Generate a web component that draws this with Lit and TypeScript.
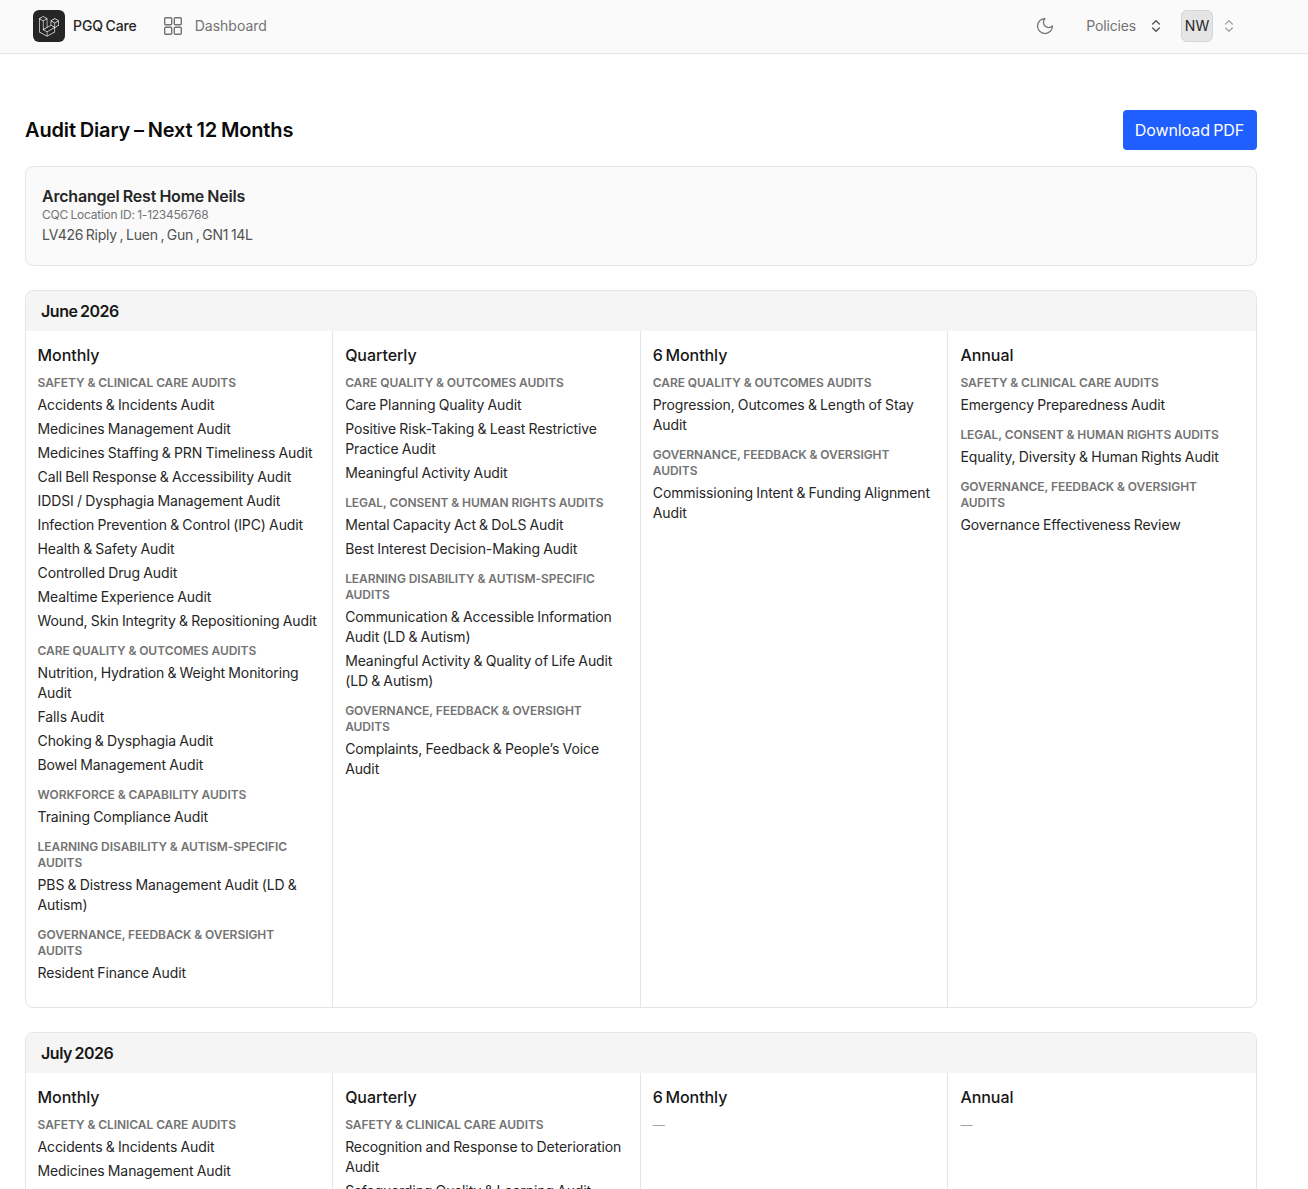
import { LitElement, html, css, svg } from "lit";
import { customElement } from "lit/decorators.js";

type Group = [string, string[]];
type Col = [string, Group[]];

const june: Col[] = [
  ["Monthly", [
    ["Safety & Clinical Care Audits", ["Accidents & Incidents Audit", "Medicines Management Audit", "Medicines Staffing & PRN Timeliness Audit", "Call Bell Response & Accessibility Audit", "IDDSI / Dysphagia Management Audit", "Infection Prevention & Control (IPC) Audit", "Health & Safety Audit", "Controlled Drug Audit", "Mealtime Experience Audit", "Wound, Skin Integrity & Repositioning Audit"]],
    ["Care Quality & Outcomes Audits", ["Nutrition, Hydration & Weight Monitoring Audit", "Falls Audit", "Choking & Dysphagia Audit", "Bowel Management Audit"]],
    ["Workforce & Capability Audits", ["Training Compliance Audit"]],
    ["Learning Disability & Autism-Specific Audits", ["PBS & Distress Management Audit (LD & Autism)"]],
    ["Governance, Feedback & Oversight Audits", ["Resident Finance Audit"]],
  ]],
  ["Quarterly", [
    ["Care Quality & Outcomes Audits", ["Care Planning Quality Audit", "Positive Risk-Taking & Least Restrictive Practice Audit", "Meaningful Activity Audit"]],
    ["Legal, Consent & Human Rights Audits", ["Mental Capacity Act & DoLS Audit", "Best Interest Decision-Making Audit"]],
    ["Learning Disability & Autism-Specific Audits", ["Communication & Accessible Information Audit (LD & Autism)", "Meaningful Activity & Quality of Life Audit (LD & Autism)"]],
    ["Governance, Feedback & Oversight Audits", ["Complaints, Feedback & People’s Voice Audit"]],
  ]],
  ["6 Monthly", [
    ["Care Quality & Outcomes Audits", ["Progression, Outcomes & Length of Stay Audit"]],
    ["Governance, Feedback & Oversight Audits", ["Commissioning Intent & Funding Alignment Audit"]],
  ]],
  ["Annual", [
    ["Safety & Clinical Care Audits", ["Emergency Preparedness Audit"]],
    ["Legal, Consent & Human Rights Audits", ["Equality, Diversity & Human Rights Audit"]],
    ["Governance, Feedback & Oversight Audits", ["Governance Effectiveness Review"]],
  ]],
];

const july: Col[] = [
  ["Monthly", [["Safety & Clinical Care Audits", ["Accidents & Incidents Audit", "Medicines Management Audit", "Medicines Staffing & PRN Timeliness Audit"]]]],
  ["Quarterly", [["Safety & Clinical Care Audits", ["Recognition and Response to Deterioration Audit", "Safeguarding Quality & Learning Audit"]]]],
  ["6 Monthly", []],
  ["Annual", []],
];

const months: [string, Col[]][] = [["June 2026", june], ["July 2026", july]];

const LOGO = "M61.8548 14.6253C61.8778 14.7102 61.8895 14.7978 61.8897 14.8858V28.5615C61.8898 28.737 61.8434 28.9095 61.7554 29.0614C61.6675 29.2132 61.5409 29.3392 61.3887 29.4265L49.9104 36.0351V49.1337C49.9104 49.4902 49.7209 49.8192 49.4118 49.9987L25.4519 63.7916C25.3971 63.8227 25.3372 63.8427 25.2774 63.8639C25.255 63.8714 25.2338 63.8851 25.2101 63.8913C25.0426 63.9354 24.8666 63.9354 24.6991 63.8913C24.6716 63.8838 24.6467 63.8689 24.6205 63.8589C24.5657 63.8389 24.5084 63.8215 24.456 63.7916L0.501061 49.9987C0.348882 49.9113 0.222437 49.7853 0.134469 49.6334C0.0465019 49.4816 0.000120578 49.3092 0 49.1337L0 8.10652C0 8.01678 0.0124642 7.92953 0.0348998 7.84477C0.0423783 7.8161 0.0598282 7.78993 0.0697995 7.76126C0.0884958 7.70891 0.105946 7.65531 0.133367 7.6067C0.152063 7.5743 0.179485 7.54812 0.20192 7.51821C0.230588 7.47832 0.256763 7.43719 0.290416 7.40229C0.319084 7.37362 0.356476 7.35243 0.388883 7.32751C0.425029 7.29759 0.457436 7.26518 0.498568 7.2415L12.4779 0.345059C12.6296 0.257786 12.8015 0.211853 12.9765 0.211853C13.1515 0.211853 13.3234 0.257786 13.475 0.345059L25.4531 7.2415H25.4556C25.4955 7.26643 25.5292 7.29759 25.5653 7.32626C25.5977 7.35119 25.6339 7.37362 25.6625 7.40104C25.6974 7.43719 25.7224 7.47832 25.7523 7.51821C25.7735 7.54812 25.8021 7.5743 25.8196 7.6067C25.8483 7.65656 25.8645 7.70891 25.8844 7.76126C25.8944 7.78993 25.9118 7.8161 25.9193 7.84602C25.9423 7.93096 25.954 8.01853 25.9542 8.10652V33.7317L35.9355 27.9844V14.8846C35.9355 14.7973 35.948 14.7088 35.9704 14.6253C35.9792 14.5954 35.9954 14.5692 36.0053 14.5405C36.0253 14.4882 36.0427 14.4346 36.0702 14.386C36.0888 14.3536 36.1163 14.3274 36.1375 14.2975C36.1674 14.2576 36.1923 14.2165 36.2272 14.1816C36.2559 14.1529 36.292 14.1317 36.3244 14.1068C36.3618 14.0769 36.3942 14.0445 36.4341 14.0208L48.4147 7.12434C48.5663 7.03694 48.7383 6.99094 48.9133 6.99094C49.0883 6.99094 49.2602 7.03694 49.4118 7.12434L61.3899 14.0208C61.4323 14.0457 61.4647 14.0769 61.5021 14.1055C61.5333 14.1305 61.5694 14.1529 61.5981 14.1803C61.633 14.2165 61.6579 14.2576 61.6878 14.2975C61.7103 14.3274 61.7377 14.3536 61.7551 14.386C61.7838 14.4346 61.8 14.4882 61.8199 14.5405C61.8312 14.5692 61.8474 14.5954 61.8548 14.6253ZM59.893 27.9844V16.6121L55.7013 19.0252L49.9104 22.3593V33.7317L59.8942 27.9844H59.893ZM47.9149 48.5566V37.1768L42.2187 40.4299L25.953 49.7133V61.2003L47.9149 48.5566ZM1.99677 9.83281V48.5566L23.9562 61.199V49.7145L12.4841 43.2219L12.4804 43.2194L12.4754 43.2169C12.4368 43.1945 12.4044 43.1621 12.3682 43.1347C12.3371 43.1097 12.3009 43.0898 12.2735 43.0624L12.271 43.0586C12.2386 43.0275 12.2162 42.9888 12.1887 42.9539C12.1638 42.9203 12.1339 42.8916 12.114 42.8567L12.1127 42.853C12.0903 42.8156 12.0766 42.7707 12.0604 42.7283C12.0442 42.6909 12.023 42.656 12.013 42.6161C12.0005 42.5688 11.998 42.5177 11.9931 42.4691C11.9881 42.4317 11.9781 42.3943 11.9781 42.3569V15.5801L6.18848 12.2446L1.99677 9.83281ZM12.9777 2.36177L2.99764 8.10652L12.9752 13.8513L22.9541 8.10527L12.9752 2.36177H12.9777ZM18.1678 38.2138L23.9574 34.8809V9.83281L19.7657 12.2459L13.9749 15.5801V40.6281L18.1678 38.2138ZM48.9133 9.14105L38.9344 14.8858L48.9133 20.6305L58.8909 14.8846L48.9133 9.14105ZM47.9149 22.3593L42.124 19.0252L37.9323 16.6121V27.9844L43.7219 31.3174L47.9149 33.7317V22.3593ZM24.9533 47.987L39.59 39.631L46.9065 35.4555L36.9352 29.7145L25.4544 36.3242L14.9907 42.3482L24.9533 47.987Z";

@customElement("app-root")
export class AppRoot extends LitElement {
  static styles = css`
    :host { display: block; height: 1189px; overflow: hidden; font-family: Inter, "Liberation Sans", sans-serif; color: #171717; background: #fff; }
    .nav { height: 52px; padding: 0 32px 1px 33px; border-bottom: 1px solid #e5e5e5; background: #fafafa; display: flex; align-items: center; }
    .logo { width: 32px; height: 32px; border-radius: 6px; background: #262626; display: flex; align-items: center; justify-content: center; color: #fff; }
    .brand { margin-left: 8px; padding-bottom: 1px; font-size: 14px; font-weight: 500; color: #262626; letter-spacing: -0.1px; word-spacing: -1px; }
    .dash { margin-left: 26px; display: flex; align-items: center; gap: 12px; font-size: 14px; font-weight: 400; color: #737373; }
    .dash-label { padding-bottom: 1px; }
    .spacer { flex: 1; }
    .nav-icon { display: block; color: #737373; }
    .policies { margin-left: 31px; padding-bottom: 1px; font-size: 14px; font-weight: 400; letter-spacing: -0.15px; color: #737373; }
    .chev { margin-left: 12px; color: #525252; }
    .avatar { margin-left: 17px; width: 32px; height: 32px; box-sizing: border-box; padding-bottom: 1px; border: 1px solid #d4d4d4; border-radius: 6px; background: #e5e5e5; display: flex; align-items: center; justify-content: center; font-size: 14px; font-weight: 400; color: #262626; }
    .chev2 { margin-left: 8px; margin-right: 39px; color: #a3a3a3; }
    main { padding: 56px 51px 0 25px; display: flex; flex-direction: column; }
    .head { display: flex; justify-content: space-between; align-items: center; height: 40px; }
    h1 { margin: 0; font-size: 20px; line-height: 28px; font-weight: 600; letter-spacing: -0.15px; word-spacing: -1px; color: #0a0a0a; }
    .btn { height: 40px; width: 134px; box-sizing: border-box; padding: 0 1px 0 0; background: #1f5eff; color: #fff; border: 0; border-radius: 4px; font: 400 16px/40px Inter, sans-serif; letter-spacing: -0.1px; word-spacing: -1px; }
    .info { margin-top: 16px; height: 100px; box-sizing: border-box; padding: 19px 16px 0; border: 1px solid #e5e5e5; border-radius: 8px; background: #fafafa; }
    .info-name { font-size: 16px; line-height: 20px; font-weight: 600; letter-spacing: -0.2px; word-spacing: -0.6px; color: #262626; }
    .info-id { font-size: 12px; line-height: 16px; letter-spacing: -0.25px; word-spacing: -0.5px; color: #737373; margin-top: 1px; }
    .info-addr { font-size: 14px; line-height: 20px; letter-spacing: -0.25px; word-spacing: -1px; color: #525252; margin-top: 2px; }
    .month { margin-top: 24px; border: 1px solid #e5e5e5; border-radius: 8px; overflow: hidden; }
    .month-head { height: 40px; background: #f5f5f5; padding-left: 15px; font-size: 16px; line-height: 40px; font-weight: 600; letter-spacing: -0.45px; word-spacing: -1.2px; color: #171717; }
    .grid { display: grid; grid-template-columns: repeat(4, 1fr); margin-left: -0.5px; }
    .col { padding: 12px 12px 20px; border-right: 1px solid #e5e5e5; min-width: 0; }
    .col:last-child { border-right-color: transparent; }
    .col-title { font-size: 16px; line-height: 24px; font-weight: 500; letter-spacing: -0.05px; word-spacing: -1.6px; color: #171717; }
    .group { margin-top: 12px; }
    .col-title + .group { margin-top: 8px; }
    .group-title { font-size: 12px; line-height: 16px; font-weight: 600; text-transform: uppercase; letter-spacing: -0.05px; word-spacing: -0.1px; color: #737373; margin-bottom: 4px; }
    .item { font-size: 14px; line-height: 20px; letter-spacing: -0.1px; word-spacing: -0.6px; color: #262626; margin-bottom: 4px; }
    .none { margin-top: 8px; font-size: 12px; line-height: 16px; color: #a3a3a3; }
  `;

  private chevrons() {
    return svg`<path d="m7 15 5 5 5-5M7 9l5-5 5 5" />`;
  }

  render() {
    return html`
      <div class="nav">
        <div class="logo">
          <svg width="20" height="21" viewBox="0 0 62 65" fill="currentColor"><path fill-rule="evenodd" d=${LOGO} /></svg>
        </div>
        <span class="brand">PGQ Care</span>
        <span class="dash">
          <svg class="nav-icon" width="20" height="20" viewBox="0 0 20 20" fill="none" stroke="currentColor" stroke-width="1.4">
            <rect x="1.7" y="1.7" width="7" height="7" rx="1" /><rect x="11.3" y="1.7" width="7" height="7" rx="1" /><rect x="1.7" y="11.3" width="7" height="7" rx="1" /><rect x="11.3" y="11.3" width="7" height="7" rx="1" />
          </svg>
          <span class="dash-label">Dashboard</span>
        </span>
        <span class="spacer"></span>
        <svg class="nav-icon" width="20" height="20" viewBox="0 0 24 24" fill="none" stroke="currentColor" stroke-width="1.5" stroke-linecap="round" stroke-linejoin="round">
          <path d="M12 3a6 6 0 0 0 9 9 9 9 0 1 1-9-9Z" />
        </svg>
        <span class="policies">Policies</span>
        <svg class="chev" width="16" height="16" viewBox="0 0 24 24" fill="none" stroke="currentColor" stroke-width="2" stroke-linecap="round" stroke-linejoin="round">${this.chevrons()}</svg>
        <div class="avatar">NW</div>
        <svg class="chev2" width="16" height="16" viewBox="0 0 24 24" fill="none" stroke="currentColor" stroke-width="2" stroke-linecap="round" stroke-linejoin="round">${this.chevrons()}</svg>
      </div>
      <main>
        <div class="head">
          <h1>Audit Diary – Next 12 Months</h1>
          <button class="btn">Download PDF</button>
        </div>
        <div class="info">
          <div class="info-name">Archangel Rest Home Neils</div>
          <div class="info-id">CQC Location ID: 1-123456768</div>
          <div class="info-addr">LV426 Riply , Luen , Gun , GN1 14L</div>
        </div>
        ${months.map(([name, cols]) => html`
          <section class="month">
            <div class="month-head">${name}</div>
            <div class="grid">
              ${cols.map(([title, groups]) => html`
                <div class="col">
                  <div class="col-title">${title}</div>
                  ${groups.length
                    ? groups.map(([g, items]) => html`
                        <div class="group">
                          <div class="group-title">${g}</div>
                          ${items.map((i) => html`<div class="item">${i}</div>`)}
                        </div>`)
                    : html`<div class="none">—</div>`}
                </div>`)}
            </div>
          </section>`)}
      </main>
    `;
  }
}
